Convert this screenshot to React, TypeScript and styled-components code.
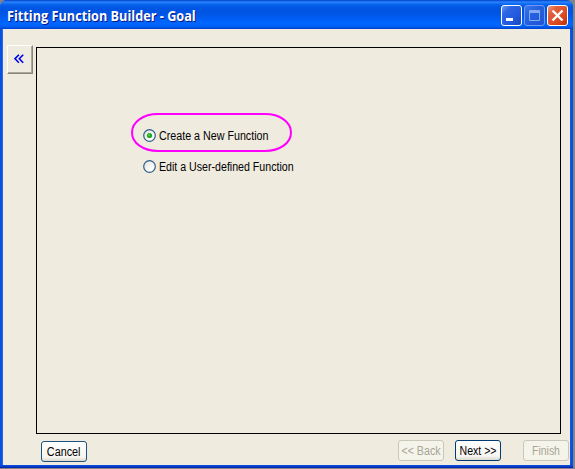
import React, { useState } from "react";
import styled, { createGlobalStyle, css } from "styled-components";

const GlobalStyle = createGlobalStyle`
  * { box-sizing: border-box; }
  body { margin: 0; background: #85838a; overflow: hidden; }
  button { padding: 0; margin: 0; }
`;

const Window = styled.div`
  width: 573px;
  height: 468px;
  display: flex;
  flex-direction: column;
  border-radius: 7px 7px 0 0;
  overflow: hidden;
  background: linear-gradient(to bottom, #0a4fe0 0, #0a4fe0 465px, #0845d8 466px, #001ea0 468px);
  font-family: "Liberation Sans", Arial, sans-serif;
  font-size: 12px;
  color: #000;
`;

const TitleBar = styled.header`
  height: 29px;
  flex: none;
  display: flex;
  align-items: flex-start;
  padding: 5px 5px 0 7px;
  background: linear-gradient(
    to bottom,
    #0848c8 0, #0f5be6 1px, #2f8aff 2px, #1a74f5 3px, #0660ec 5px, #0055e2 8px,
    #0054e3 13px, #005cf2 18px, #0066ff 23px, #0066fc 25px, #005bf0 27px, #003fc8 29px
  );
`;

const Title = styled.h1`
  margin: 0;
  padding-top: 1px;
  flex: 1;
  font: bold 13.5px/21px "Open Sans", sans-serif;
  color: #fff;
  text-shadow: 1px 1px 0 #0a1883;
  white-space: nowrap;
  transform: scaleX(0.94);
  transform-origin: left;
`;

const Captions = styled.div`
  display: flex;
  gap: 2px;
`;

const CaptionButton = styled.button<{ $kind: "min" | "max" | "close" }>`
  width: 21px;
  height: 21px;
  display: block;
  border: 1px solid #fff;
  border-radius: 3px;
  background: linear-gradient(135deg, #6f9cf4 0%, #2f66e4 25%, #2159de 65%, #1746b8 100%);
  ${(p) =>
    p.$kind === "max" &&
    css`
      border-color: #6f9af0;
      background: linear-gradient(135deg, #3b78ec 0%, #2560e0 40%, #1e56d2 100%);
    `}
  ${(p) =>
    p.$kind === "close" &&
    css`
      background: linear-gradient(135deg, #f0a088 0%, #e2603c 25%, #dc4a22 65%, #b83210 100%);
    `}
  svg { display: block; }
`;

const Client = styled.main`
  flex: 1;
  display: flex;
  flex-direction: column;
  margin: 0 3px 3px;
  padding: 16px 1px 0 4px;
  background: #efebdf;
  box-shadow: -1px 0 0 #1b6af0, 2px 0 0 -1px #1456e0;
`;

const Body = styled.div`
  display: flex;
  align-items: flex-start;
  height: 389px;
`;

const CollapseButton = styled.button`
  width: 26px;
  height: 29px;
  display: flex;
  align-items: center;
  justify-content: center;
  padding: 0 2px 2px 0;
  background: #efebdf;
  border: 1px solid;
  border-color: #fff #8a877a #8a877a #fff;
  box-shadow: inset -1px -1px 0 #aca899;
`;

const Panel = styled.section`
  width: 525px;
  height: 387px;
  margin: 2px 0 0 3px;
  padding: 65px 0 0 94px;
  border: 1px solid #000;
`;

const Highlight = styled.div`
  position: relative;
  width: 161px;
  height: 39px;
  padding: 15px 0 0 12px;
  > svg { position: absolute; left: 0; top: 0; pointer-events: none; }
`;

const PlainOption = styled.div`
  padding: 7px 0 0 12px;
`;

const Option = styled.label`
  display: flex;
  align-items: center;
  gap: 3px;
  height: 15px;
  white-space: nowrap;
  > svg { flex: none; }
`;

const HiddenRadio = styled.input`
  position: absolute;
  opacity: 0;
  width: 0;
  height: 0;
  margin: 0;
`;

const Caption = styled.span<{ $scale: number; $center?: boolean }>`
  display: inline-block;
  font-size: 12px;
  line-height: 15px;
  padding-top: 2px;
  transform: scaleX(${(p) => p.$scale});
  transform-origin: ${(p) => (p.$center ? "center" : "left")};
  white-space: nowrap;
`;

const Footer = styled.footer`
  display: flex;
  align-items: flex-start;
  height: 31px;
  padding: 6px 0 0 34px;
`;

const PushButton = styled.button<{ $gap?: number; $down?: boolean; $primary?: boolean }>`
  width: 46px;
  height: 21px;
  flex: none;
  margin-left: ${(p) => p.$gap ?? 0}px;
  margin-top: ${(p) => (p.$down ? 1 : 0)}px;
  display: flex;
  align-items: center;
  justify-content: center;
  border: 1px solid ${(p) => (p.$primary ? "#003c74" : "#1c5180")};
  border-radius: 3px;
  background: linear-gradient(to bottom, #fff 0, #f6f5f0 80%, #dcd8cc 100%);
  font-family: inherit;
  color: #000;
  &:disabled {
    color: #a8a596;
    border-color: #cbc8ba;
    background: #f5f4ea;
  }
`;

function Radio({ id, on }: { id: string; on: boolean }) {
  return (
    <svg width="13" height="13" viewBox="0 0 13 13">
      <defs>
        <linearGradient id={id} x1="0" y1="0" x2="1" y2="1">
          <stop offset="0" stopColor="#dcdcd7" />
          <stop offset="0.7" stopColor="#fff" />
        </linearGradient>
      </defs>
      <circle cx="6.5" cy="6.5" r="5.8" fill={`url(#${id})`} stroke="#2d5d8c" strokeWidth="1.2" />
      {on && <circle cx="6.5" cy="6.5" r="2.6" fill="#22a820" />}
      {on && <circle cx="6" cy="6" r="1" fill="#55d551" />}
    </svg>
  );
}

export default function App() {
  const [goal, setGoal] = useState("create");
  return (
    <>
      <GlobalStyle />
      <Window>
        <TitleBar>
          <Title>Fitting Function Builder - Goal</Title>
          <Captions>
            <CaptionButton $kind="min" aria-label="Minimize">
              <svg width="19" height="19"><rect x="4" y="12" width="7" height="3" fill="#fff" /></svg>
            </CaptionButton>
            <CaptionButton $kind="max" aria-label="Maximize" disabled>
              <svg width="19" height="19" fill="none" stroke="#86a8ee">
                <path d="M4.5 4.5h10v10h-10zM4.5 5.5h10M4.5 6.5h10" />
              </svg>
            </CaptionButton>
            <CaptionButton $kind="close" aria-label="Close">
              <svg width="19" height="19" stroke="#fff" strokeWidth="2.4"><path d="M4.5 4.5l10 10M14.5 4.5l-10 10" /></svg>
            </CaptionButton>
          </Captions>
        </TitleBar>
        <Client>
          <Body>
            <CollapseButton aria-label="Collapse">
              <svg width="10" height="10" fill="none" stroke="#0000f0" strokeWidth="1.6">
                <path d="M4.9 .7L1 4.7l3.9 4M9.2 .7L5.3 4.7l3.9 4" />
              </svg>
            </CollapseButton>
            <Panel>
              <Highlight>
                <Option>
                  <HiddenRadio type="radio" name="goal" checked={goal === "create"} onChange={() => setGoal("create")} />
                  <Radio id="r1" on={goal === "create"} />
                  <Caption $scale={0.892}>Create a New Function</Caption>
                </Option>
                <svg width="161" height="39" fill="none" stroke="#ff00ff" strokeWidth="2">
                  <path d="M27 1H134C149 1 160 9 160 19.5S149 38 134 38H27C12 38 1 30 1 19.5S12 1 27 1Z" />
                </svg>
              </Highlight>
              <PlainOption>
                <Option>
                  <HiddenRadio type="radio" name="goal" checked={goal === "edit"} onChange={() => setGoal("edit")} />
                  <Radio id="r2" on={goal === "edit"} />
                  <Caption $scale={0.885}>Edit a User-defined Function</Caption>
                </Option>
              </PlainOption>
            </Panel>
          </Body>
          <Footer>
            <PushButton $down><Caption $center $scale={0.9}>Cancel</Caption></PushButton>
            <PushButton $gap={311} disabled><Caption $center $scale={0.89}>&lt;&lt; Back</Caption></PushButton>
            <PushButton $gap={11} $primary><Caption $center $scale={0.88}>Next &gt;&gt;</Caption></PushButton>
            <PushButton $gap={22} disabled><Caption $center $scale={0.87}>Finish</Caption></PushButton>
          </Footer>
        </Client>
      </Window>
    </>
  );
}
